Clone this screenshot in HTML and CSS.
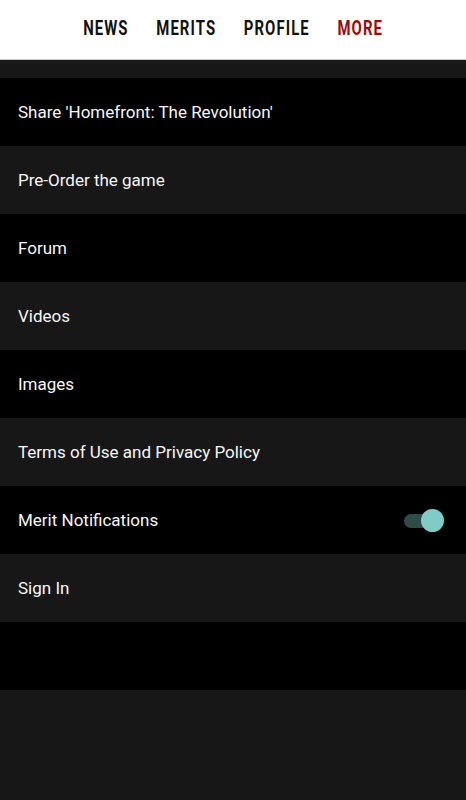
FILE: index.html
```html
<!DOCTYPE html>
<html>
<head>
<meta charset="utf-8">
<link rel="stylesheet" href="styles.css">
</head>
<body>
<header class="top">
  <nav class="nav">
    <span class="tab">NEWS</span>
    <span class="tab">MERITS</span>
    <span class="tab">PROFILE</span>
    <span class="tab active">MORE</span>
  </nav>
</header>
<main class="list">
  <div class="spacer"></div>
  <div class="row dark">Share 'Homefront: The Revolution'</div>
  <div class="row">Pre-Order the game</div>
  <div class="row dark">Forum</div>
  <div class="row">Videos</div>
  <div class="row dark">Images</div>
  <div class="row">Terms of Use and Privacy Policy</div>
  <div class="row dark toggle-row">
    <span>Merit Notifications</span>
    <span class="switch"><span class="track"></span><span class="thumb"></span></span>
  </div>
  <div class="row">Sign In</div>
  <div class="row dark"></div>
</main>
</body>
</html>
```
FILE: styles.css
```css
html, body {
  margin: 0;
  padding: 0;
  background: #171717;
  height: 100%;
}
body {
  font-family: Roboto, "Liberation Sans", sans-serif;
}
.top {
  height: 59px;
  background: #fff;
  border-bottom: 1px solid #c8c8c8;
  display: flex;
  justify-content: center;
  align-items: center;
}
.nav {
  display: flex;
  gap: 39px;
  margin-top: -3px;
  transform: scaleX(0.71);
  transform-origin: center;
}
.tab {
  font-family: Roboto, "Liberation Sans", sans-serif;
  font-size: 21px;
  font-weight: 700;
  letter-spacing: 1.5px;
  color: #111;
}
.tab.active {
  color: #9b0b0b;
}
.list {
  display: flex;
  flex-direction: column;
}
.spacer {
  height: 18px;
  background: #171717;
}
.row {
  height: 68px;
  box-sizing: border-box;
  padding: 0 18px;
  display: flex;
  align-items: center;
  background: #171717;
  color: #f7f7f7;
  font-size: 17px;
}
.row.dark {
  background: #000;
}
.toggle-row {
  justify-content: space-between;
}
.switch {
  position: relative;
  width: 40px;
  height: 23px;
  margin-right: 4px;
}
.track {
  position: absolute;
  left: 0;
  top: 5px;
  width: 30px;
  height: 14px;
  border-radius: 7px;
  background: #2e4c49;
}
.thumb {
  position: absolute;
  right: 0;
  top: 0;
  width: 23px;
  height: 23px;
  border-radius: 50%;
  background: #80cbc4;
}
```
